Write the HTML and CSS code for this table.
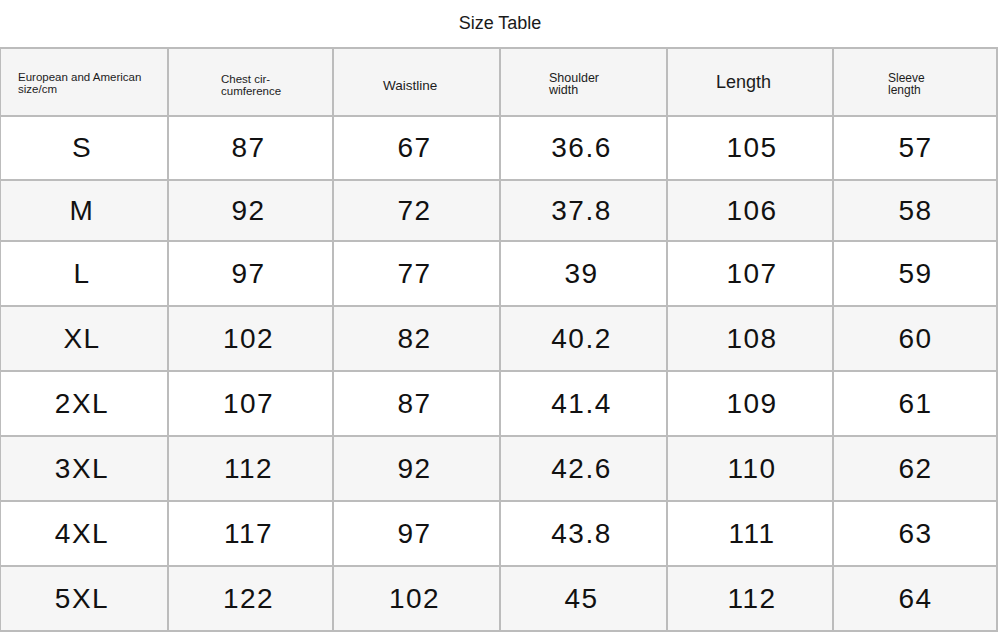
FILE: index.html
```html
<!DOCTYPE html>
<html>
<head>
<meta charset="utf-8">
<link rel="stylesheet" href="styles.css">
</head>
<body>
<div class="page">
  <h1 class="title">Size Table</h1>
  <table class="size-table">
    <colgroup>
      <col class="c0"><col class="c1"><col class="c2"><col class="c3"><col class="c4"><col class="c5">
    </colgroup>
    <thead>
      <tr class="head">
        <th class="h h0"><span>European and American<br>size/cm</span></th>
        <th class="h h1"><span>Chest cir-<br>cumference</span></th>
        <th class="h h2"><span>Waistline</span></th>
        <th class="h h3"><span>Shoulder<br>width</span></th>
        <th class="h h4"><span>Length</span></th>
        <th class="h h5"><span>Sleeve<br>length</span></th>
      </tr>
    </thead>
    <tbody>
      <tr class="r odd first"><td>S</td><td>87</td><td>67</td><td>36.6</td><td class="d4">105</td><td class="d5">57</td></tr>
      <tr class="r even short"><td>M</td><td>92</td><td>72</td><td>37.8</td><td class="d4">106</td><td class="d5">58</td></tr>
      <tr class="r odd"><td>L</td><td>97</td><td>77</td><td>39</td><td class="d4">107</td><td class="d5">59</td></tr>
      <tr class="r even"><td>XL</td><td>102</td><td>82</td><td>40.2</td><td class="d4">108</td><td class="d5">60</td></tr>
      <tr class="r odd"><td>2XL</td><td>107</td><td>87</td><td>41.4</td><td class="d4">109</td><td class="d5">61</td></tr>
      <tr class="r even"><td>3XL</td><td>112</td><td>92</td><td>42.6</td><td class="d4">110</td><td class="d5">62</td></tr>
      <tr class="r odd"><td>4XL</td><td>117</td><td>97</td><td>43.8</td><td class="d4">111</td><td class="d5">63</td></tr>
      <tr class="r even"><td>5XL</td><td>122</td><td>102</td><td>45</td><td class="d4">112</td><td class="d5">64</td></tr>
    </tbody>
  </table>
</div>
</body>
</html>
```

FILE: styles.css
```css
html, body {
  margin: 0;
  padding: 0;
  background: #ffffff;
}
body {
  font-family: "Liberation Sans", Arial, sans-serif;
  color: #111;
  width: 1000px;
  height: 635px;
  overflow: hidden;
}
.page {
  display: flex;
  flex-direction: column;
}
.title {
  margin: 0;
  height: 47px;
  line-height: 46px;
  font-size: 18px;
  font-weight: normal;
  text-align: center;
  color: #1a1a1a;
}
.size-table {
  border-collapse: collapse;
  table-layout: fixed;
  width: 997px;
  margin-left: -1px;
}
.c0 { width: 168px; }
.c1 { width: 165px; }
.c2 { width: 167px; }
.c3 { width: 167px; }
.c4 { width: 166px; }
.c5 { width: 164px; }

.size-table th,
.size-table td {
  border: 2px solid #bcbcbc;
  padding: 0;
}
.head {
  height: 68px;
  background: #f5f5f5;
}
.h {
  font-weight: normal;
  text-align: left;
  vertical-align: top;
  color: #1c1c1c;
}
.h span { display: block; }
.h0 span { padding: 22px 0 0 17px; font-size: 11.5px; line-height: 12px; }
.h1 span { padding: 24px 0 0 52px; font-size: 11.5px; line-height: 12px; }
.h2 span { padding: 29px 0 0 49px; font-size: 13.5px; line-height: 16px; }
.h3 span { padding: 23px 0 0 48px; font-size: 12.5px; line-height: 12px; }
.h4 span { padding: 23px 0 0 48px; font-size: 18px; line-height: 20px; }
.h5 span { padding: 23px 0 0 54px; font-size: 12px; line-height: 12px; }

.r { height: 65px; }
.r.first { height: 64px; }
.r.short { height: 61px; }
.odd { background: #ffffff; }
.even { background: #f6f6f6; }
.r td {
  text-align: center;
  vertical-align: middle;
  font-size: 28px;
  letter-spacing: 1.5px;
  padding-right: 4px;
  color: #111;
}
.r td.d4 { padding-right: 0; padding-left: 4px; }
.r td.d5 { padding-right: 0; padding-left: 1px; }
```
